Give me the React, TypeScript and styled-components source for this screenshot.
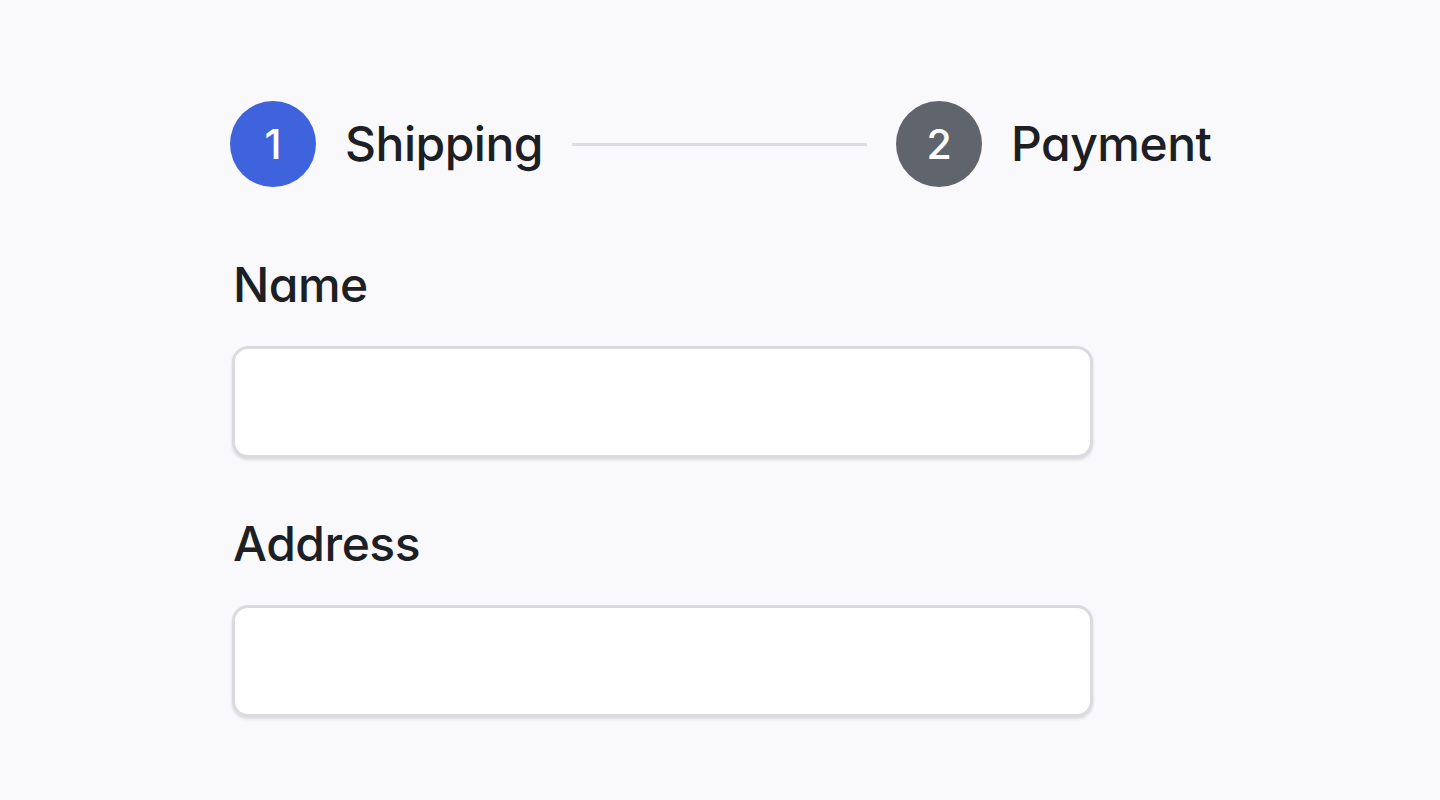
import React from "react";
import styled, { createGlobalStyle } from "styled-components";

const Global = createGlobalStyle`
  html, body {
    margin: 0;
    padding: 0;
    background: #f9f9fb;
  }
  body {
    font-family: Inter, "Noto Sans", "Liberation Sans", sans-serif;
    color: #1c2024;
    min-height: 800px;
  }
`;

const Page = styled.main`
  min-height: 800px;
  box-sizing: border-box;
  padding: 101px 0 0 230px;
  background: #f9f9fb;
`;

const Stepper = styled.ol`
  list-style: none;
  margin: 0;
  padding: 0;
  display: flex;
  align-items: center;
`;

const Step = styled.li`
  display: flex;
  align-items: center;
  gap: 29px;
`;

const StepCircle = styled.span<{ $active?: boolean }>`
  width: 86px;
  height: 86px;
  border-radius: 50%;
  display: flex;
  align-items: center;
  justify-content: center;
  background: ${(p) => (p.$active ? "#3e63dd" : "#60646c")};
  color: #ffffff;
  font-size: 41px;
  font-weight: 500;
  line-height: 1;
`;

const StepLabel = styled.span`
  font-size: 48px;
  font-weight: 500;
  line-height: 58px;
  letter-spacing: -0.5px;
  color: #1c2024;
  font-feature-settings: "cv11" 1;
`;

const Connector = styled.li`
  width: 295px;
  height: 3px;
  background: #dcdce3;
  margin: 0 29px 0 29px;
`;

const Form = styled.form`
  margin-top: 69px;
  padding-left: 2px;
  display: flex;
  flex-direction: column;
  gap: 57px;
`;

const Field = styled.div`
  display: flex;
  flex-direction: column;
  gap: 32px;
`;

const Label = styled.label`
  font-size: 48px;
  font-weight: 500;
  line-height: 58px;
  letter-spacing: -0.5px;
  color: #1c2024;
  padding-left: 1px;
  font-feature-settings: "cv11" 1;
`;

const Input = styled.input`
  box-sizing: border-box;
  width: 861px;
  height: 112px;
  border: 3px solid #dadae1;
  border-radius: 16px;
  background: #ffffff;
  box-shadow: 0 2px 3px rgba(30, 30, 60, 0.14);
  font-family: inherit;
  font-size: 40px;
  padding: 0 24px;
  outline: none;
`;

export default function App() {
  return (
    <>
      <Global />
      <Page>
        <Stepper>
          <Step>
            <StepCircle $active>1</StepCircle>
            <StepLabel>Shipping</StepLabel>
          </Step>
          <Connector aria-hidden />
          <Step>
            <StepCircle>2</StepCircle>
            <StepLabel>Payment</StepLabel>
          </Step>
        </Stepper>
        <Form onSubmit={(e) => e.preventDefault()}>
          <Field>
            <Label htmlFor="name">Name</Label>
            <Input id="name" type="text" />
          </Field>
          <Field>
            <Label htmlFor="address">Address</Label>
            <Input id="address" type="text" />
          </Field>
        </Form>
      </Page>
    </>
  );
}
